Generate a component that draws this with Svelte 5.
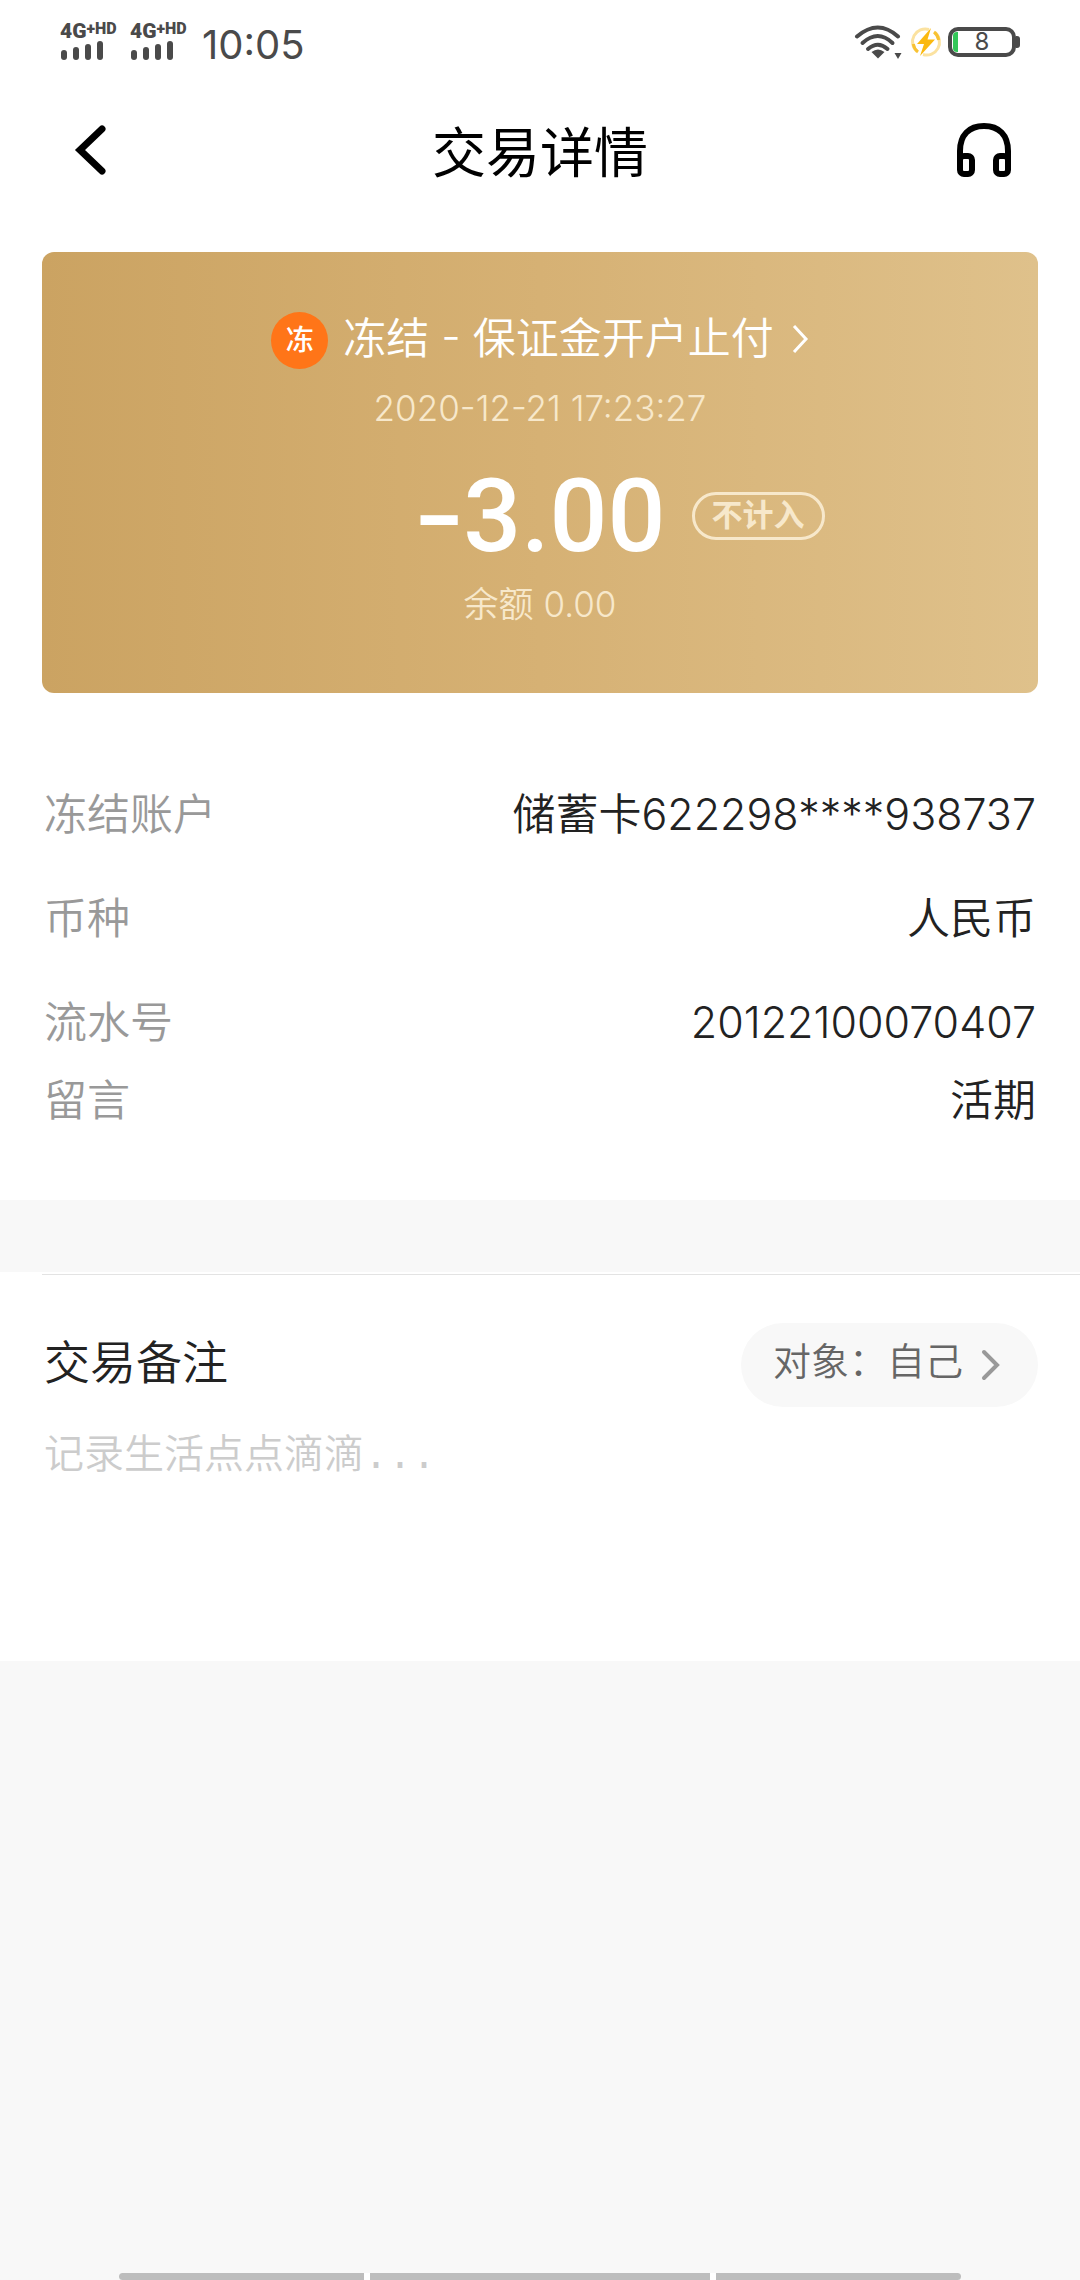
<script>
  const rows = [
    { label: '冻结账户', value: '储蓄卡622298****938737' },
    { label: '币种', value: '人民币' },
    { label: '流水号', value: '20122100070407' },
    { label: '留言', value: '活期', tight: true }
  ];
  let note = $state('');
</script>

<div class="page">
  <div class="status">
    <div class="left">
      {#each [1, 2] as sim (sim)}
        <div class="signal">
          <div class="net"><span>4G</span><sup>+HD</sup></div>
          <svg width="44" height="22" viewBox="0 0 44 22" aria-hidden="true">
            <g fill="#4a4a4a">
              <rect x="1" y="11" width="6" height="10" rx="3" />
              <rect x="13" y="8" width="6" height="13" rx="3" />
              <rect x="25" y="5" width="6" height="16" rx="3" />
              <rect x="37" y="2" width="6" height="19" rx="3" />
            </g>
          </svg>
        </div>
      {/each}
      <time class="clock">10:05</time>
    </div>
    <div class="right">
      <svg width="50" height="36" viewBox="0 0 50 36" aria-hidden="true">
        <g fill="none" stroke="#4a4a4a" stroke-width="4" stroke-linecap="round">
          <path d="M3 12.500Q24 -5.500 44 12.500" />
          <path d="M8.500 19Q24 5 38.500 19" />
          <path d="M14 25Q24 16.500 33.500 25" />
        </g>
        <path d="M17.500 28Q24 23 30.500 28L24 34.500Z" fill="#4a4a4a" />
        <path d="M40.500 29H47.500L44 35Z" fill="#4a4a4a" />
      </svg>
      <svg width="34" height="34" viewBox="0 0 34 34" aria-hidden="true">
        <g fill="none" stroke-width="3">
          <path d="M20 4.500A12.800 12.800 0 0 0 8 26.500" stroke="#fbe2a0" />
          <path d="M14 29.500A12.800 12.800 0 0 0 26 7.500" stroke="#fbe2a0" />
          <path d="M4.300 19A12.800 12.800 0 0 0 9 27" stroke="#f8c233" />
          <path d="M29.700 15A12.800 12.800 0 0 0 25 7" stroke="#f8c233" />
        </g>
        <path d="M22 3L8 19H15L11 31L26 14.500H18.500Z" fill="#fbb90f" />
      </svg>
      <div class="battery">
        <span class="charge"></span>
        <span class="level">8</span>
        <span class="nub"></span>
      </div>
    </div>
  </div>

  <header>
    <button class="icon" aria-label="返回">
      <svg width="42" height="54" viewBox="0 0 42 54" aria-hidden="true">
        <path d="M34 6L12 27L34 48" fill="none" stroke="#000" stroke-width="7" stroke-linecap="round" stroke-linejoin="miter" />
      </svg>
    </button>
    <h1>交易详情</h1>
    <button class="icon end" aria-label="客服">
      <svg width="56" height="56" viewBox="0 0 56 56" fill="none" stroke="#000" stroke-width="6" aria-hidden="true">
        <path d="M4 40V29C4 13 13 4 28 4S52 13 52 29V40" />
        <rect x="4" y="34" width="12" height="18" rx="4" />
        <rect x="40" y="34" width="12" height="18" rx="4" />
      </svg>
    </button>
  </header>

  <main>
    <section class="detail">
      <div class="card">
        <button class="kind">
          <span class="tag">冻</span>
          <span class="name">冻结 - 保证金开户止付</span>
          <svg width="20" height="30" viewBox="0 0 20 30" aria-hidden="true">
            <path d="M5 1L17 14L5 27" fill="none" stroke="#fff" stroke-width="3" />
          </svg>
        </button>
        <time class="date">2020-12-21 17:23:27</time>
        <div class="sum">
          <strong><span class="sign">−</span>3.00</strong>
          <span class="badge">不计入</span>
        </div>
        <p class="balance">余额 0.00</p>
      </div>

      <dl>
        {#each rows as row (row.label)}
          <div class="row" class:tight={row.tight}>
            <dt>{row.label}</dt>
            <dd>{row.value}</dd>
          </div>
        {/each}
      </dl>
    </section>

    <section class="memo">
      <div class="rule"></div>
      <div class="memo-head">
        <label for="note">交易备注</label>
        <button class="target">
          <span>对象：自己</span>
          <svg width="20" height="32" viewBox="0 0 20 32" aria-hidden="true">
            <path d="M3 3L16 16L3 29" fill="none" stroke="#999" stroke-width="4" stroke-linecap="round" />
          </svg>
        </button>
      </div>
      <textarea id="note" rows="3" placeholder="记录生活点点滴滴..." bind:value={note}></textarea>
    </section>
  </main>

  <div class="navbar" aria-hidden="true"><i></i><i></i><i></i></div>
</div>

<style>
  :global(body) {
    margin: 0;
    background: #f8f8f8;
  }
  .page {
    min-height: 100vh;
    display: flex;
    flex-direction: column;
    font-family: Inter, 'Noto Sans CJK SC', sans-serif;
    font-weight: 350;
    color: #222;
    background: #f8f8f8;
  }
  button {
    border: 0;
    padding: 0;
    background: none;
    font: inherit;
    color: inherit;
  }
  svg {
    display: block;
  }
  .status {
    display: flex;
    justify-content: space-between;
    align-items: center;
    height: 84px;
    padding: 0 64px 0 60px;
    background: #fff;
    color: #4a4a4a;
  }
  .left,
  .right {
    display: flex;
    align-items: center;
  }
  .signal {
    width: 70px;
  }
  .net {
    display: flex;
    align-items: flex-start;
    height: 16px;
    font: 900 21px/16px Roboto, sans-serif;
  }
  .net sup {
    font-size: 16px;
    line-height: 12px;
  }
  .clock {
    font-size: 40px;
    line-height: 48px;
    font-weight: 400;
    padding: 6px 0 0 2px;
  }
  .right {
    gap: 5px;
  }
  .battery {
    position: relative;
    display: flex;
    align-items: center;
    justify-content: center;
    box-sizing: border-box;
    width: 68px;
    height: 30px;
    border: 4px solid #4a4a4a;
    border-radius: 10px;
  }
  .charge {
    position: absolute;
    left: 1px;
    top: 1px;
    bottom: 1px;
    width: 5px;
    border-radius: 4px 0 0 4px;
    background: #34c759;
  }
  .nub {
    position: absolute;
    right: -8px;
    top: 5px;
    width: 4px;
    height: 12px;
    border-radius: 0 3px 3px 0;
    background: #4a4a4a;
  }
  .level {
    font-size: 24px;
    line-height: 24px;
    font-weight: 400;
  }
  header {
    display: grid;
    grid-template-columns: 1fr auto 1fr;
    align-items: center;
    height: 132px;
    padding: 0 68px;
    background: #fff;
    color: #000;
  }
  .end {
    justify-self: end;
  }
  .icon {
    width: fit-content;
  }
  h1 {
    margin: 0;
    padding-top: 8px;
    font-size: 54px;
    line-height: 72px;
    font-weight: 400;
  }
  .detail {
    padding: 36px 42px 70px;
    background: #fff;
  }
  .card {
    display: flex;
    flex-direction: column;
    align-items: center;
    padding: 56px 0 65px;
    border-radius: 12px;
    background: linear-gradient(90deg, #cba362, #d6b174 50%, #dfc18b);
    color: #fff;
    font-feature-settings: 'case' 1;
  }
  .kind {
    display: flex;
    align-items: center;
    gap: 15px;
    font-size: 43px;
    line-height: 64px;
  }
  .name {
    padding-bottom: 4px;
    line-height: 60px;
  }
  .tag {
    width: 57px;
    height: 57px;
    border-radius: 50%;
    background: #ff7518;
    font-size: 28px;
    line-height: 57px;
    font-weight: 500;
    text-align: center;
  }
  .date,
  .balance {
    margin: 0;
    font-size: 35px;
    line-height: 48px;
    color: #f7e8cb;
  }
  .date {
    margin-top: 12px;
  }
  .sum {
    display: grid;
    grid-template-columns: 1fr auto 1fr;
    align-items: center;
    width: 100%;
    margin: 28px 0 8px;
  }
  .sum strong {
    grid-column: 2;
    font: 500 102px/112px Roboto, sans-serif;
  }
  .sign {
    font-size: 88px;
    line-height: 80px;
    font-weight: 700;
  }
  .badge {
    justify-self: start;
    margin-left: 26px;
    padding: 0 17px 2px;
    border: 3px solid #f7e8cb;
    border-radius: 24px;
    font-size: 31px;
    line-height: 40px;
    font-weight: 700;
    color: #f7e8cb;
  }
  dl {
    display: flex;
    flex-direction: column;
    margin: 91px 0 0;
    padding: 0 2px;
    font-size: 43px;
    line-height: 60px;
  }
  .row {
    display: flex;
    justify-content: space-between;
  }
  .row + .row {
    margin-top: 44px;
  }
  .row.tight {
    margin-top: 18px;
  }
  dt {
    color: #999;
  }
  dd {
    margin: 0;
  }
  .memo {
    margin-top: 72px;
    padding: 2px 42px 0;
    background: #fff;
  }
  .rule {
    height: 1px;
    margin-right: -42px;
    background: #e3e3e3;
  }
  .memo-head {
    display: flex;
    justify-content: space-between;
    align-items: center;
    padding-top: 48px;
  }
  .memo-head label {
    padding: 0 0 6px 2px;
    font-size: 46px;
    line-height: 64px;
  }
  .target {
    display: flex;
    align-items: center;
    gap: 18px;
    height: 84px;
    padding: 0 37px 0 32px;
    border-radius: 42px;
    background: #f8f8f8;
    font-size: 38px;
    color: #666;
  }
  .target span {
    padding-bottom: 14px;
  }
  textarea {
    display: block;
    box-sizing: border-box;
    width: 100%;
    height: 240px;
    margin-top: 14px;
    padding: 9px 2px 0;
    border: 0;
    outline: 0;
    resize: none;
    background: transparent;
    font: 350 40px/56px 'Liberation Mono', 'Noto Sans CJK SC', monospace;
    color: #222;
  }
  textarea::placeholder {
    color: #ccc;
  }
  .navbar {
    display: grid;
    grid-template-columns: 244fr 338fr 244fr;
    gap: 6px;
    width: 78%;
    height: 7px;
    margin: auto auto 0;
    border-radius: 4px;
    overflow: hidden;
    background: #fff;
  }
  .navbar i {
    background: #bdbdbd;
  }
</style>
